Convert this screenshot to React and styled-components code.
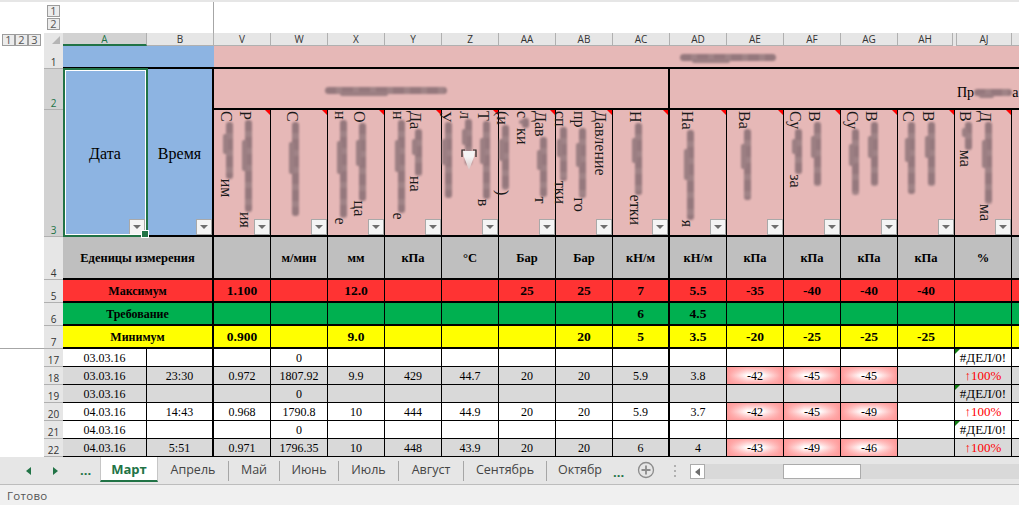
import React from "react";
import styled, { createGlobalStyle } from "styled-components";

const GlobalStyle = createGlobalStyle`
  html, body { margin: 0; padding: 0; background: #fff; }
  * { box-sizing: border-box; }
`;

const Page = styled.div`
  width: 1019px;
  height: 505px;
  display: flex;
  flex-direction: column;
  overflow: hidden;
  font-family: "Liberation Serif", serif;
  color: #000;
`;

const TopEdge = styled.div`
  height: 2px;
  background: #e6e6e6;
`;

const OutlineStrip = styled.div`
  width: 214px;
  height: 31px;
  padding: 3px 0 0 47px;
  border-right: 1px solid #a6a6a6;
  display: flex;
  flex-direction: column;
  gap: 1px;
`;

const LevelButton = styled.div`
  width: 13px;
  height: 12px;
  border: 1px solid #9c9c9c;
  background: #ececec;
  color: #555;
  font: 11px/10px "Open Sans", sans-serif;
  text-align: center;
`;

const Sheet = styled.div`
  height: 424px;
  display: grid;
  grid-template-columns: 44px 19px 84px 67px repeat(15, 57px);
  grid-template-rows: 13px 23px 41px 127px 43px 23px 23px 23px repeat(6, 18px);
  overflow: hidden;
`;

const LevelRow = styled.div`
  display: flex;
  gap: 0;
  padding: 1px 0 0 2px;
`;

const Gutter = styled.div`
  grid-row: span ${(p) => p.$rows};
  border-bottom: ${(p) => (p.$line ? "1px solid #a6a6a6" : "0")};
  margin-right: -1px;
`;

const Corner = styled.div`
  background: #e6e6e6;
  position: relative;
  &::after {
    content: "";
    position: absolute;
    right: 3px;
    bottom: 2px;
    border-left: 8px solid transparent;
    border-bottom: 8px solid #b5b5b5;
  }
`;

const ColHead = styled.div`
  background: ${(p) => (p.$active ? "#d2d2d2" : "#e6e6e6")};
  color: ${(p) => (p.$active ? "#217346" : "#333")};
  border-right: 1px solid #b0b0b0;
  border-left: ${(p) => (p.$afterHidden ? "1px solid #b0b0b0" : "0")};
  border-bottom: ${(p) => (p.$active ? "2px solid #217346" : "1px solid #b0b0b0")};
  margin-right: ${(p) => (p.$beforeHidden ? "2px" : "0")};
  margin-left: ${(p) => (p.$afterHidden ? "1px" : "0")};
  box-shadow: ${(p) => (p.$beforeHidden ? "3px 0 0 #e6e6e6" : "none")};
  font: 10px/13px "Open Sans", sans-serif;
  text-align: center;
`;

const RowHead = styled.div`
  background: ${(p) => (p.$active ? "#d2d2d2" : "#e6e6e6")};
  color: ${(p) => (p.$active ? "#217346" : "#333")};
  border-bottom: 1px solid #b0b0b0;
  font: 10px/12px "Open Sans", sans-serif;
  text-align: center;
  display: flex;
  align-items: flex-end;
  justify-content: center;
`;

const Cell = styled.div`
  grid-column: span ${(p) => p.$span || 1};
  grid-row: span ${(p) => p.$rows || 1};
  background: ${(p) => p.$bg || "#fff"};
  border-right: ${(p) => p.$r ?? 1}px solid #000;
  border-bottom: ${(p) => p.$b ?? 1}px solid #000;
  display: flex;
  align-items: center;
  justify-content: center;
  position: relative;
  white-space: nowrap;
  font-size: 12px;
  line-height: 1;
`;

const BoldCell = styled(Cell)`
  font-weight: 700;
  font-size: ${(p) => p.$size || 12}px;
  padding-top: ${(p) => p.$drop || 0}px;
`;

const BigCell = styled(Cell)`
  font-size: 16px;
  padding-top: 4px;
`;

const Selection = styled.div`
  position: absolute;
  inset: -1px -1px -2px 0;
  border: 2px solid #217346;
  outline: 1px solid #fff;
  outline-offset: -3px;
  pointer-events: none;
  z-index: 3;
  &::after {
    content: "";
    position: absolute;
    right: -3px;
    bottom: -3px;
    width: 6px;
    height: 6px;
    background: #217346;
    border: 1px solid #fff;
  }
`;

const TitleCell = styled(Cell)`
  justify-content: flex-start;
  align-items: flex-start;
  padding: ${(p) => p.$top}px 0 0 ${(p) => p.$left}px;
  font-size: 14px;
`;

const Streak = styled.span`
  display: inline-block;
  position: relative;
  width: ${(p) => p.$w}px;
  height: 7px;
  margin-top: ${(p) => p.$mt || 0}px;
  background: repeating-linear-gradient(90deg, #8d7277 0 11px, #997e82 11px 17px);
  border-radius: 4px;
  filter: blur(1.3px);
  opacity: 0.9;
  &::after {
    content: "";
    position: absolute;
    left: 12%;
    top: 5px;
    width: 40%;
    height: 4px;
    background: #94797e;
    border-radius: 2px;
  }
`;

const HeadCell = styled(Cell)`
  background: #e6b8b7;
  justify-content: flex-start;
  align-items: flex-start;
  padding-top: 1px;
  &::before {
    content: "";
    position: absolute;
    top: 0;
    right: 0;
    border-top: 5px solid #ff0000;
    border-left: 5px solid transparent;
  }
`;

const VLine = styled.div`
  writing-mode: vertical-rl;
  width: 12px;
  flex: none;
  margin-left: ${(p) => p.$ml}px;
  font-size: 16px;
  line-height: 12px;
  color: #1a1a1a;
  white-space: nowrap;
`;

const VStreak = styled.span`
  display: inline-block;
  position: relative;
  width: 7px;
  height: ${(p) => p.$len}px;
  margin: 0 2px;
  background: repeating-linear-gradient(180deg, #8d7277 0 11px, #997e82 11px 17px);
  border-radius: 3px;
  filter: blur(1.2px);
  opacity: 0.9;
  vertical-align: middle;
  &::after {
    content: "";
    position: absolute;
    left: -3px;
    top: 22%;
    width: 5px;
    height: 34%;
    background: #94797e;
    border-radius: 2px;
  }
`;

const FilterButton = styled.div`
  position: absolute;
  right: ${(p) => p.$right ?? 0}px;
  bottom: 0;
  width: 16px;
  height: 16px;
  background: #f4f4f4;
  border: 1px solid #a9a9a9;
  z-index: 2;
  &::after {
    content: "";
    position: absolute;
    left: 3px;
    top: 5px;
    border-top: 4px solid #6e6e6e;
    border-left: 4px solid transparent;
    border-right: 4px solid transparent;
  }
`;

const Pointer = styled.svg`
  position: absolute;
  left: 18px;
  top: 38px;
  width: 18px;
  height: 24px;
  filter: blur(0.5px);
`;

const HotCell = styled(Cell)`
  background:
    linear-gradient(90deg, #ff9a9a, rgba(255, 255, 255, 0) 36%, rgba(255, 255, 255, 0) 64%, #ff9a9a),
    linear-gradient(0deg, #ffa6a6, #fff 46%, #fff 54%, #ffa6a6);
`;

const ErrorCell = styled(Cell)`
  font-size: 13px;
  &::before {
    content: "";
    position: absolute;
    top: 0;
    left: 0;
    border-top: 5px solid #107c10;
    border-right: 5px solid transparent;
  }
`;

const UpCell = styled(Cell)`
  color: #ff0000;
  font-size: 13px;
`;

const TabBar = styled.div`
  height: 28px;
  background: #e6e6e6;
  border-bottom: 1px solid #bdbdbd;
  display: flex;
  align-items: flex-start;
`;

const TabNav = styled.div`
  width: 100px;
  height: 27px;
  display: flex;
  align-items: center;
  padding-left: 26px;
  gap: 22px;
`;

const NavArrow = styled.span`
  width: 0;
  height: 0;
  border-top: 4px solid transparent;
  border-bottom: 4px solid transparent;
  border-left: ${(p) => (p.$right ? "5px solid #217346" : "0")};
  border-right: ${(p) => (p.$right ? "0" : "5px solid #217346")};
`;

const Dots = styled.span`
  color: #217346;
  font: 700 13px/1 "Open Sans", sans-serif;
  margin-top: ${(p) => p.$mt || 0}px;
`;

const ActiveTab = styled.div`
  width: 58px;
  height: 25px;
  background: #fff;
  border-left: 1px solid #c6c6c6;
  border-right: 1px solid #c6c6c6;
  border-bottom: 2px solid #217346;
  color: #217346;
  font: 700 13px/24px "Open Sans", sans-serif;
  text-align: center;
`;

const Tab = styled.div`
  width: ${(p) => p.$w}px;
  height: 20px;
  margin-top: 4px;
  border-right: ${(p) => (p.$plain ? "0" : "1px solid #a6a6a6")};
  color: #444;
  font: 12.5px/18px "Open Sans", sans-serif;
  text-align: center;
  flex: none;
`;

const AddTab = styled.svg`
  width: 18px;
  height: 18px;
  margin: 4px 0 0 13px;
  flex: none;
`;

const Grip = styled.div`
  width: 2px;
  height: 12px;
  margin: 8px 0 0 19px;
  flex: none;
  background: repeating-linear-gradient(180deg, #b0b0b0 0 2px, transparent 2px 5px);
`;

const ScrollTrack = styled.div`
  flex: 1;
  height: 15px;
  margin: 7px 0 0 14px;
  background: #d9d9d9;
  display: flex;
`;

const ScrollButton = styled.div`
  width: 15px;
  height: 15px;
  background: #fff;
  border: 1px solid #ababab;
  display: flex;
  align-items: center;
  justify-content: center;
  &::after {
    content: "";
    border-top: 4px solid transparent;
    border-bottom: 4px solid transparent;
    border-right: 5px solid #6e6e6e;
  }
`;

const ScrollThumb = styled.div`
  width: 78px;
  height: 15px;
  margin-left: 78px;
  background: #fff;
  border: 1px solid #ababab;
`;

const StatusBar = styled.div`
  flex: 1;
  background: #f0f0f0;
  color: #555;
  padding: 3px 0 0 7px;
  font: 11.5px/16px "Open Sans", sans-serif;
  letter-spacing: 0.3px;
`;

const GRAY = "#d9d9d9";
const PINK = "#e6b8b7";
const BLUE = "#8db4e2";
const HEAD_GRAY = "#bfbfbf";

const columns = ["V", "W", "X", "Y", "Z", "AA", "AB", "AC", "AD", "AE", "AF", "AG", "AH", "AJ"];

// each line: centre x inside the cell, first letters, total length, tail
const headers = [
  [[15, "С", 85, "им"], [34, "Р", 120, "ия"]],
  [[24, "С", 106, ""]],
  [[15, "н", 118, "е"], [34, "О", 106, "ца"]],
  [[16, "н", 113, "е"], [33, "Да", 83, "на"]],
  [[6, "У", 88, ""], [26, "л", 58, ""], [44, "Т", 98, "в"]],
  [[6, "(и", 93, ")"], [26, "с", 38, "ки"], [44, "Дав", 96, "т"]],
  [[7, "сп", 98, "тки"], [26, "пр", 106, "го"], [44, "Давление", 0, ""]],
  [[25, "Н", 116, "етки"]],
  [[20, "На", 118, "я"]],
  [[20, "Ва", 91, ""]],
  [[14, "Су", 81, "за"], [33, "В", 76, ""]],
  [[14, "Су", 86, ""], [33, "В", 76, ""]],
  [[13, "С", 84, ""], [33, "В", 76, ""]],
  [[13, "В", 56, "ма"], [33, "Д", 110, "ма"]],
];

const units = ["", "м/мин", "мм", "кПа", "°C", "Бар", "Бар", "кН/м", "кН/м", "кПа", "кПа", "кПа", "кПа", "%"];
const maxRow = ["1.100", "", "12.0", "", "", "25", "25", "7", "5.5", "-35", "-40", "-40", "-40", ""];
const reqRow = ["", "", "", "", "", "", "", "6", "4.5", "", "", "", "", ""];
const minRow = ["0.900", "", "9.0", "", "", "", "20", "5", "3.5", "-20", "-25", "-25", "-25", ""];

const rows = [
  { n: 17, date: "03.03.16", time: "", values: ["", "0"] },
  { n: 18, gray: true, date: "03.03.16", time: "23:30", values: ["0.972", "1807.92", "9.9", "429", "44.7", "20", "20", "5.9", "3.8", "-42", "-45", "-45"] },
  { n: 19, gray: true, date: "03.03.16", time: "", values: ["", "0"] },
  { n: 20, date: "04.03.16", time: "14:43", values: ["0.968", "1790.8", "10", "444", "44.9", "20", "20", "5.9", "3.7", "-42", "-45", "-49"] },
  { n: 21, date: "04.03.16", time: "", values: ["", "0"] },
  { n: 22, gray: true, date: "04.03.16", time: "5:51", values: ["0.971", "1796.35", "10", "448", "43.9", "20", "20", "6", "4", "-43", "-49", "-46"] },
];

const rightWidth = (i) => (i === 7 ? 2 : 1);

const SummaryRow = ({ n, label, values, bg }) => (
  <>
    <RowHead>{n}</RowHead>
    <BoldCell $span={2} $bg={bg} $r={2} $b={2}>
      {label}
    </BoldCell>
    {values.map((v, i) => (
      <BoldCell key={i} $bg={bg} $r={rightWidth(i)} $b={2} $size={13.5}>
        {v}
      </BoldCell>
    ))}
    <Cell $bg={bg} $b={2} />
  </>
);

const DataRow = ({ row }) => {
  const bg = row.gray ? GRAY : "#fff";
  return (
    <>
      <RowHead>{row.n}</RowHead>
      <Cell $bg={bg}>{row.date}</Cell>
      <Cell $bg={bg} $r={2}>{row.time}</Cell>
      {columns.map((c, i) => {
        const v = row.values[i] ?? "";
        if (c === "AJ") {
          return row.values.length > 2 ? (
            <UpCell key={c} $bg={bg}>↑100%</UpCell>
          ) : (
            <ErrorCell key={c} $bg={bg}>#ДЕЛ/0!</ErrorCell>
          );
        }
        if (i >= 9 && i <= 11 && v) return <HotCell key={c}>{v}</HotCell>;
        return (
          <Cell key={c} $bg={bg} $r={rightWidth(i)}>
            {v}
          </Cell>
        );
      })}
      <Cell $bg={bg} />
    </>
  );
};

const HeaderLines = ({ lines }) => {
  let end = 0;
  return lines.map(([x, start, total, tail], i) => {
    const ml = x - 6 - end;
    end = x + 6;
    const len = total - (start.length + tail.length) * 8 - 4;
    return (
      <VLine key={i} $ml={ml}>
        {start}
        {total > 0 && <VStreak $len={len} />}
        {tail}
      </VLine>
    );
  });
};

const App = () => (
  <Page>
    <GlobalStyle />
    <TopEdge />
    <OutlineStrip>
      <LevelButton>1</LevelButton>
      <LevelButton>2</LevelButton>
    </OutlineStrip>
    <Sheet>
      <LevelRow>
        <LevelButton>1</LevelButton>
        <LevelButton>2</LevelButton>
        <LevelButton>3</LevelButton>
      </LevelRow>
      <Corner />
      <ColHead $active>A</ColHead>
      <ColHead>B</ColHead>
      {columns.map((c) => (
        <ColHead key={c} $beforeHidden={c === "AH"} $afterHidden={c === "AJ"}>
          {c}
        </ColHead>
      ))}
      <ColHead />

      <Gutter $rows={7} $line />
      <RowHead>1</RowHead>
      <Cell $span={2} $bg={BLUE} $r={0} $b={2} />
      <TitleCell $span={15} $bg={PINK} $r={0} $b={2} $left={466} $top={8}>
        <Streak $w={96} />
      </TitleCell>

      <RowHead $active>2</RowHead>
      <BigCell $rows={2} $bg={BLUE} $r={0} $b={2}>
        Дата
        <Selection />
        <FilterButton $right={2} />
      </BigCell>
      <BigCell $rows={2} $bg={BLUE} $r={2} $b={2}>
        Время
        <FilterButton />
      </BigCell>
      <TitleCell $span={8} $bg={PINK} $r={2} $b={2} $left={111} $top={18}>
        <Streak $w={122} />
      </TitleCell>
      <TitleCell $span={7} $bg={PINK} $r={0} $b={2} $left={287} $top={17}>
        Пр
        <Streak $w={38} $mt={3} />а
      </TitleCell>

      <RowHead $active>3</RowHead>
      {columns.map((c, i) => (
        <HeadCell key={c} $r={rightWidth(i)} $b={2}>
          <HeaderLines lines={headers[i]} />
          {c === "Z" && (
            <Pointer viewBox="0 0 18 24">
              <defs>
                <linearGradient id="pointerFade" x1="0" y1="0" x2="0" y2="1">
                  <stop offset="0.3" stopColor="#f4f4f4" />
                  <stop offset="1" stopColor="#d9c4c4" />
                </linearGradient>
              </defs>
              <path d="M3 3h12l-1 6-5 13-5-13z" fill="url(#pointerFade)" />
              <path d="M2 9V2h3M13 2h3v7" fill="none" stroke="#222" strokeWidth="1.2" />
            </Pointer>
          )}
          <FilterButton />
        </HeadCell>
      ))}
      <HeadCell $r={0} $b={2} />

      <RowHead>4</RowHead>
      <BoldCell $span={2} $bg={HEAD_GRAY} $r={2} $b={2} $drop={1} $size={12.5}>
        Еденицы измерения
      </BoldCell>
      {units.map((u, i) => (
        <BoldCell key={i} $bg={HEAD_GRAY} $r={rightWidth(i)} $b={2} $size={12.5} $drop={1}>
          {u}
        </BoldCell>
      ))}
      <Cell $bg={HEAD_GRAY} $b={2} />

      <SummaryRow n={5} label="Максимум" values={maxRow} bg="#ff3333" />
      <SummaryRow n={6} label="Требование" values={reqRow} bg="#00b050" />
      <SummaryRow n={7} label="Минимум" values={minRow} bg="#ffff00" />

      <Gutter $rows={6} />
      {rows.map((row) => (
        <DataRow key={row.n} row={row} />
      ))}
    </Sheet>
    <TabBar>
      <TabNav>
        <NavArrow />
        <NavArrow $right />
        <Dots>...</Dots>
      </TabNav>
      <ActiveTab>Март</ActiveTab>
      <Tab $w={71}>Апрель</Tab>
      <Tab $w={51}>Май</Tab>
      <Tab $w={59}>Июнь</Tab>
      <Tab $w={60}>Июль</Tab>
      <Tab $w={65}>Август</Tab>
      <Tab $w={83}>Сентябрь</Tab>
      <Tab $w={66} $plain>Октябр</Tab>
      <Dots $mt={9}>...</Dots>
      <AddTab viewBox="0 0 18 18">
        <circle cx="9" cy="9" r="7.5" fill="none" stroke="#8c8c8c" strokeWidth="1.3" />
        <path d="M9 4.5v9M4.5 9h9" stroke="#8c8c8c" strokeWidth="1.8" />
      </AddTab>
      <Grip />
      <ScrollTrack>
        <ScrollButton />
        <ScrollThumb />
      </ScrollTrack>
    </TabBar>
    <StatusBar>Готово</StatusBar>
  </Page>
);

export default App;
